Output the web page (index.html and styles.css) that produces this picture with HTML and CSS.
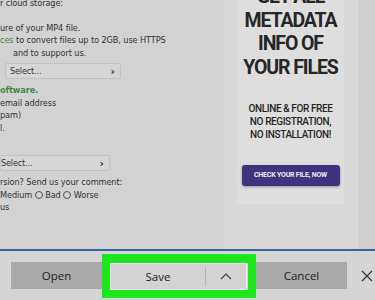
FILE: index.html
```html
<!DOCTYPE html>
<html lang="en">
<head>
  <meta charset="UTF-8">
  <title>Save MP4 file</title>
  <link rel="stylesheet" href="styles.css">
</head>
<body>
  <div class="page">
    <div class="article">
      <p class="line top">r cloud storage:</p>
      <p class="line spaced">ure of your MP4 file.</p>
      <p class="line"><span class="green">ces</span> to convert files up to 2GB, use HTTPS</p>
      <p class="line indent">and to support us.</p>
      <div class="select first">
        <span>Select...</span>
        <span class="arrow">&rsaquo;</span>
      </div>
      <p class="line green bold">oftware.</p>
      <p class="line">email address</p>
      <p class="line">pam)</p>
      <p class="line">l.</p>
      <div class="select second">
        <span>Select...</span>
        <span class="arrow">&rsaquo;</span>
      </div>
      <p class="line">rsion? Send us your comment:</p>
      <p class="line">Medium <span class="radio"></span> Bad <span class="radio"></span> Worse</p>
      <p class="line">us</p>
    </div>

    <div class="side">
      <div class="ad">
        <div class="ad-title">GET ALL<br>METADATA<br>INFO OF<br>YOUR FILES</div>
        <div class="ad-sub">ONLINE &amp; FOR FREE<br>NO REGISTRATION,<br>NO INSTALLATION!</div>
        <div class="ad-btn">CHECK YOUR FILE, NOW</div>
      </div>
    </div>
    <div class="edge"></div>
  </div>

  <div class="download">
    <div class="btn dark open">Open</div>
    <div class="highlight">
      <div class="save">
        <span class="save-label">Save</span>
        <span class="save-more">
          <svg width="12" height="7" viewBox="0 0 12 7"><polyline points="1,6 6,1 11,6" fill="none" stroke="#444" stroke-width="1.2"/></svg>
        </span>
      </div>
    </div>
    <div class="btn dark cancel">Cancel</div>
    <div class="close">
      <svg width="12" height="12" viewBox="0 0 12 12"><path d="M1 1 L11 11 M11 1 L1 11" stroke="#333" stroke-width="1.2"/></svg>
    </div>
  </div>
</body>
</html>
```

FILE: styles.css
```css
* {
  box-sizing: border-box;
}

body {
  margin: 0;
  width: 375px;
  height: 300px;
  overflow: hidden;
  background-color: #d2d2d2;
  font-family: 'DejaVu Sans', Verdana, sans-serif;
}

/* page behind the download bar */
.page {
  display: flex;
  height: 249px;
  overflow: hidden;
}

.article {
  width: 224px;
  color: #333;
  font-size: 8.2px;
  letter-spacing: -0.1px;
}

.line {
  margin: 0;
  height: 12.5px;
  line-height: 12.5px;
  white-space: nowrap;
}

.line.top {
  margin-top: -3px;
}

.line.spaced {
  margin-top: 12px;
}

.line.indent {
  padding-left: 13px;
}

.green {
  color: #3d8a3d;
}

.bold {
  font-weight: bold;
}

.select {
  display: flex;
  justify-content: space-between;
  align-items: center;
  height: 16px;
  background-color: #d6d6d6;
  border: 1px solid #c2c2c2;
  border-radius: 2px;
  font-size: 8px;
  color: #333;
}

.select.first {
  width: 116px;
  margin: 4px 0 5px 5px;
  padding: 0 5px 0 4px;
}

.select.second {
  width: 110px;
  margin: 21px 0 5px 0;
  padding: 0 5px 0 0;
}

.arrow {
  font-size: 11px;
  font-weight: bold;
}

.radio {
  display: inline-block;
  width: 8px;
  height: 8px;
  border: 1px solid #555;
  border-radius: 50%;
  vertical-align: -1px;
}

/* ad column */
.side {
  width: 134px;
  background-color: #d8d8d8;
  padding-left: 13px;
}

.ad {
  width: 107px;
  height: 219px;
  background-color: #dedede;
  text-align: center;
  color: #262626;
  font-family: Roboto, sans-serif;
  font-weight: bold;
}

.ad-title {
  margin-top: -15px;
  font-size: 19.5px;
  line-height: 23.5px;
  letter-spacing: -1.1px;
}

.ad-sub {
  margin-top: 23px;
  font-size: 10px;
  line-height: 13px;
  font-weight: 500;
  letter-spacing: -0.4px;
}

.ad-btn {
  width: 98px;
  height: 21px;
  margin: 24px auto 0;
  line-height: 21px;
  background-color: #40327e;
  border-radius: 3px;
  color: #eeeef5;
  font-size: 7px;
  letter-spacing: -0.2px;
  box-shadow: 0 1px 3px rgba(0, 0, 0, 0.35);
}

.edge {
  flex: 1;
  background-color: #cfcfcf;
}

/* download bar */
.download {
  display: flex;
  align-items: center;
  height: 51px;
  padding-left: 11px;
  border-top: 2px solid #3f5f9e;
  background-color: #d5d5d5;
  font-family: 'Open Sans', sans-serif;
  font-size: 11.5px;
  color: #222;
}

.btn {
  display: flex;
  align-items: center;
  justify-content: center;
  height: 27px;
}

.btn.dark {
  background-color: #a9a9a9;
}

.btn.open {
  width: 91px;
}

.btn.cancel {
  width: 91px;
}

.highlight {
  width: 154px;
  height: 44px;
  border: 8px solid #1ee61e;
  border-top-width: 9px;
  border-bottom-width: 8px;
}

.save {
  display: flex;
  height: 100%;
  margin-right: 1px;
  background-color: #d3d3d3;
  border: 1px solid #f2f2f2;
}

.save-label {
  flex: 1;
  display: flex;
  align-items: center;
  justify-content: center;
  border-right: 1px solid #b5b5b5;
  margin: 3px 0;
}

.save-more {
  width: 40px;
  display: flex;
  align-items: center;
  justify-content: center;
}

.close {
  display: flex;
  margin-left: 14px;
}
```
